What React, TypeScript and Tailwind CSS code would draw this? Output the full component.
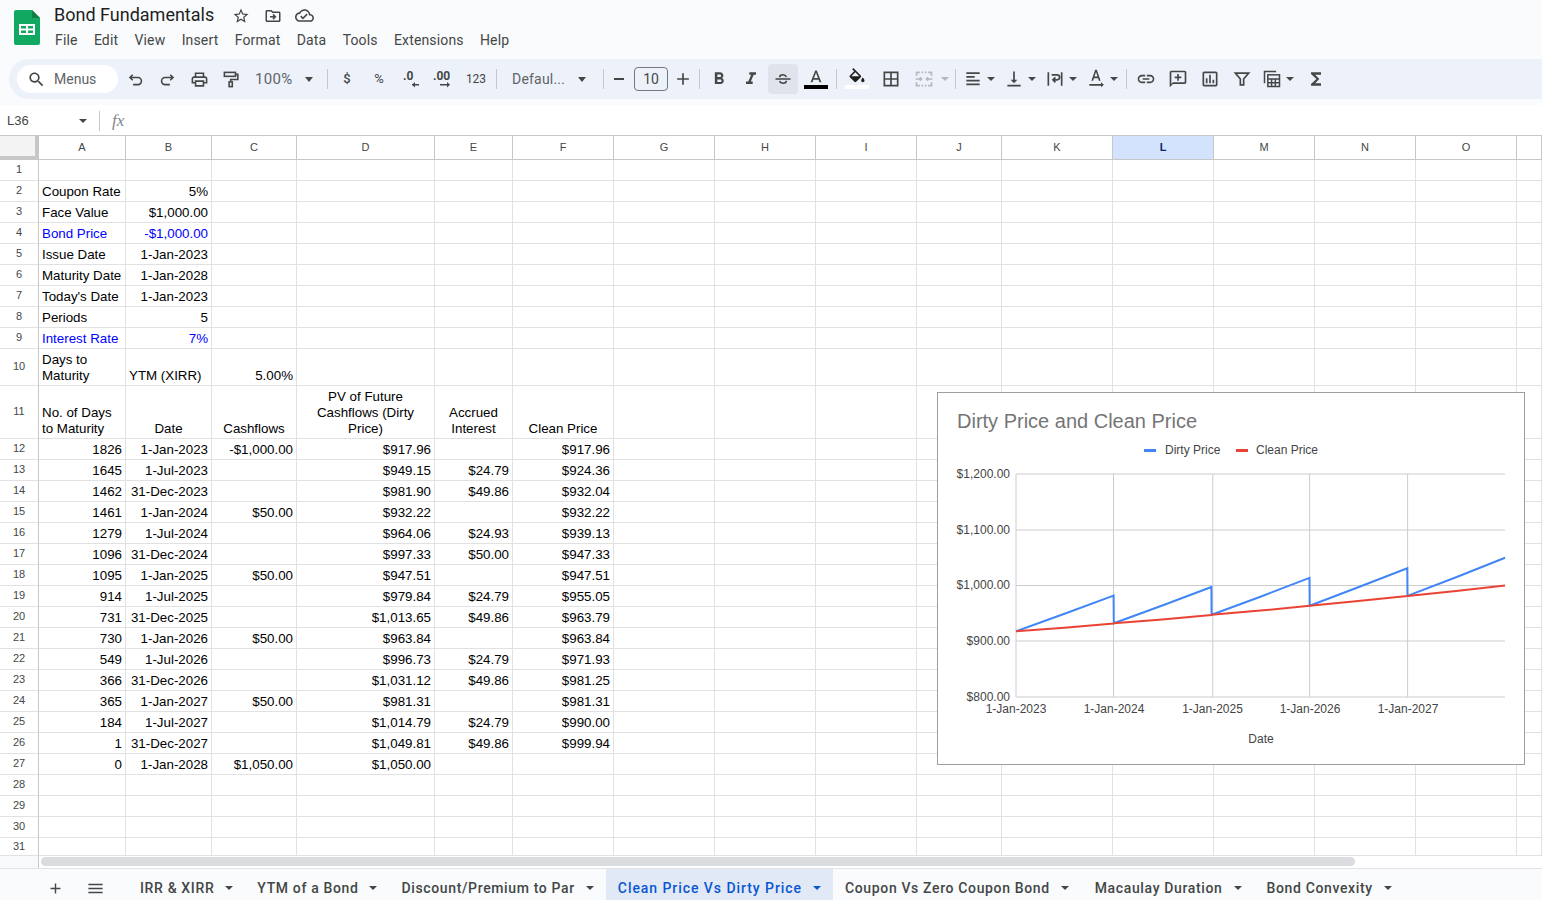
import React from "react";

const I = ({ d, s = 19, c = "#444746", children }: { d?: string; s?: number; c?: string; children?: React.ReactNode }) => (
  <svg width={s} height={s} viewBox="0 0 24 24" fill={c}>
    {d && <path d={d} />}
    {children}
  </svg>
);
const Stroke = ({ s = 19, c = "#444746", w = 2, children }: { s?: number; c?: string; w?: number; children: React.ReactNode }) => (
  <svg width={s} height={s} viewBox="0 0 24 24" fill="none" stroke={c} strokeWidth={w}>
    {children}
  </svg>
);
const Caret = ({ c = "border-t-[#444746]" }: { c?: string }) => (
  <span className={`inline-block w-0 h-0 border-x-[4.5px] border-x-transparent border-t-[5px] ${c}`} />
);
const SmallCaret = ({ c = "border-t-[#444746]" }: { c?: string }) => (
  <span className={`inline-block w-0 h-0 border-x-[4px] border-x-transparent border-t-[4px] ${c}`} />
);
const B = ({ className = "w-8", children }: { className?: string; children: React.ReactNode }) => (
  <div className={`${className} h-[28px] flex items-center justify-center shrink-0`}>{children}</div>
);
const Sep = ({ className = "" }: { className?: string }) => <div className={`w-px h-5 bg-[#c7c7c7] shrink-0 ${className}`} />;

const cols = ["", "A", "B", "C", "D", "E", "F", "G", "H", "I", "J", "K", "L", "M", "N", "O", ""];

type Row = (string | null)[];
const info: Record<number, Row> = {
  2: ["Coupon Rate", "5%"],
  3: ["Face Value", "$1,000.00"],
  4: ["Bond Price", "-$1,000.00"],
  5: ["Issue Date", "1-Jan-2023"],
  6: ["Maturity Date", "1-Jan-2028"],
  7: ["Today's Date", "1-Jan-2023"],
  8: ["Periods", "5"],
  9: ["Interest Rate", "7%"],
  10: ["Days to\nMaturity", "YTM (XIRR)", "5.00%"],
  11: ["No. of Days\nto Maturity", "Date", "Cashflows", "PV of Future\nCashflows (Dirty\nPrice)", "Accrued\nInterest", "Clean Price"],
  12: ["1826", "1-Jan-2023", "-$1,000.00", "$917.96", null, "$917.96"],
  13: ["1645", "1-Jul-2023", null, "$949.15", "$24.79", "$924.36"],
  14: ["1462", "31-Dec-2023", null, "$981.90", "$49.86", "$932.04"],
  15: ["1461", "1-Jan-2024", "$50.00", "$932.22", null, "$932.22"],
  16: ["1279", "1-Jul-2024", null, "$964.06", "$24.93", "$939.13"],
  17: ["1096", "31-Dec-2024", null, "$997.33", "$50.00", "$947.33"],
  18: ["1095", "1-Jan-2025", "$50.00", "$947.51", null, "$947.51"],
  19: ["914", "1-Jul-2025", null, "$979.84", "$24.79", "$955.05"],
  20: ["731", "31-Dec-2025", null, "$1,013.65", "$49.86", "$963.79"],
  21: ["730", "1-Jan-2026", "$50.00", "$963.84", null, "$963.84"],
  22: ["549", "1-Jul-2026", null, "$996.73", "$24.79", "$971.93"],
  23: ["366", "31-Dec-2026", null, "$1,031.12", "$49.86", "$981.25"],
  24: ["365", "1-Jan-2027", "$50.00", "$981.31", null, "$981.31"],
  25: ["184", "1-Jul-2027", null, "$1,014.79", "$24.79", "$990.00"],
  26: ["1", "31-Dec-2027", null, "$1,049.81", "$49.86", "$999.94"],
  27: ["0", "1-Jan-2028", "$1,050.00", "$1,050.00", null, null],
};

function align(r: number, c: number) {
  if (r === 11) return c === 0 ? "text-left" : "text-center";
  if (r === 10) return c === 2 ? "text-right" : "text-left";
  if (r < 10) return c === 0 ? "text-left" : "text-right";
  return "text-right";
}

const rowNums = Array.from({ length: 31 }, (_, i) => i + 1);

const days = [0, 181, 364, 365, 546, 729, 730, 912, 1095, 1096, 1277, 1460, 1461, 1642, 1825];
const dirty = [917.96, 949.15, 981.9, 932.22, 964.06, 997.33, 947.51, 979.84, 1013.65, 963.84, 996.73, 1031.12, 981.31, 1014.79, 1049.81];
const clean = [917.96, 924.36, 932.04, 932.22, 939.13, 947.33, 947.51, 955.05, 963.79, 963.84, 971.93, 981.25, 981.31, 990.0, 999.94];
const px = (d: number) => 1016 + d * 0.268;
const py = (v: number) => 697 - (v - 800) * 0.5575;
const line = (a: number[]) => a.map((v, i) => `${px(days[i]).toFixed(1)},${py(v).toFixed(1)}`).join(" ");

function Chart() {
  const t = "text-[12px] fill-[#444444]";
  return (
    <div className="absolute left-[937px] top-[256px] w-[588px] h-[373px] bg-white border border-[#9e9e9e]">
      <svg width="586" height="371" viewBox="938 393 586 371">
        <text x="957" y="428" className="text-[20px] fill-[#757575]">Dirty Price and Clean Price</text>
        <rect x="1144" y="449" width="12" height="3" fill="#4285f4" />
        <text x="1165" y="454" className={t}>Dirty Price</text>
        <rect x="1236" y="449" width="12" height="3" fill="#ea4335" />
        <text x="1256" y="454" className={t}>Clean Price</text>
        {[474, 530, 585.5, 641, 697].map((y) => (
          <line key={y} x1="1016" x2="1505" y1={y} y2={y} stroke="#cccccc" />
        ))}
        {[1016, 1113.5, 1212.8, 1309.6, 1407.6].map((x) => (
          <line key={x} x1={x} x2={x} y1="474" y2="697" stroke="#cccccc" />
        ))}
        {[["$1,200.00", 478], ["$1,100.00", 534], ["$1,000.00", 589], ["$900.00", 645], ["$800.00", 701]].map(([l, y]) => (
          <text key={l} x="1010" y={y} textAnchor="end" className={t}>{l}</text>
        ))}
        {[["1-Jan-2023", 1016], ["1-Jan-2024", 1114], ["1-Jan-2025", 1212.5], ["1-Jan-2026", 1310], ["1-Jan-2027", 1408]].map(([l, x]) => (
          <text key={l} x={x} y="713" textAnchor="middle" className={t}>{l}</text>
        ))}
        <text x="1261" y="743" textAnchor="middle" className={t}>Date</text>
        <polyline points={line(dirty)} fill="none" stroke="#4285f4" strokeWidth="2" />
        <polyline points={line(clean)} fill="none" stroke="#ea4335" strokeWidth="2" />
      </svg>
    </div>
  );
}

function Grid() {
  return (
    <div className="relative h-[720px] overflow-hidden border-t border-[#c7c7c7] -mt-px box-content">
      <div className="grid grid-cols-[39px_87px_86px_85px_138px_78px_101px_101px_101px_101px_85px_111px_101px_101px_101px_101px_25px] grid-rows-[24px_repeat(9,21px)_37px_53px_repeat(19,21px)_18px] text-[13.33px] leading-4 text-black">
        {cols.map((c, i) =>
          i === 0 ? (
            <div key={i} className="bg-[#f3f3f3] border-r-4 border-b-4 border-[#c7c7c7]" />
          ) : (
            <div
              key={i}
              className={`flex items-center justify-center border-r border-b border-[#c7c7c7] pb-[2px] text-[11px] ${c === "L" ? "bg-[#d3e3fd] text-[#0b2a66] font-bold" : "text-[#444746]"}`}
            >
              {c}
            </div>
          )
        )}
        {rowNums.map((r) => (
          <React.Fragment key={r}>
            <div className="flex items-center justify-center border-r border-r-[#c7c7c7] border-b border-b-[#e1e1e1] pb-[2px] text-[11px] text-[#444746]">
              {r}
            </div>
            {cols.slice(1).map((_, c) => {
              const v = info[r]?.[c] ?? null;
              const blue = (r === 4 || r === 9) && c < 2;
              return (
                <div
                  key={c}
                  className={`flex flex-col justify-end border-r border-b border-[#e1e1e1] px-[3px] pb-px whitespace-pre ${align(r, c)} ${blue ? "text-[#0000ff]" : ""}`}
                >
                  {v}
                </div>
              );
            })}
          </React.Fragment>
        ))}
      </div>
      <Chart />
    </div>
  );
}

const tabs = ["IRR & XIRR", "YTM of a Bond", "Discount/Premium to Par", "Clean Price Vs Dirty Price", "Coupon Vs Zero Coupon Bond", "Macaulay Duration", "Bond Convexity"];

export default function App() {
  return (
    <div className="w-[1542px] h-[900px] overflow-hidden flex flex-col bg-white font-['Liberation_Sans',Arial,sans-serif]">
      <div className="h-[105px] bg-[#f9fbfd] shrink-0">
        <div className="h-[59px] flex">
          <div className="pl-[14px] pt-[10px] w-[54px] shrink-0">
            <svg width="26" height="35" viewBox="0 0 26 35">
              <path d="M2 0h16l8 8v25a2 2 0 0 1-2 2H2a2 2 0 0 1-2-2V2a2 2 0 0 1 2-2z" fill="#11a862" />
              <path d="M18 0l8 8h-8z" fill="#0b8043" />
              <path d="M5 14h16v11H5zM7 16v2.5h5V16zM14 16v2.5h5V16zM7 20.500v2.500h5v-2.500zM14 20.500v2.500h5v-2.500z" fill="#ffffff" fillRule="evenodd" />
            </svg>
          </div>
          <div className="flex flex-col font-['Roboto',sans-serif]">
            <div className="h-[27px] pt-[3px] flex items-center text-[#1f1f1f]">
              <span className="text-[18px] leading-6 w-[178px] shrink-0 -mt-px">Bond Fundamentals</span>
              <div className="w-[32px] flex pt-px"><I s={18} d="M22 9.240l-7.190-.620L12 2 9.190 8.630 2 9.240l5.460 4.730L5.820 21 12 17.270 18.180 21l-1.630-7.030L22 9.240zM12 15.400l-3.760 2.270 1-4.280-3.320-2.880 4.380-.380L12 6.100l1.710 4.040 4.380.380-3.320 2.880 1 4.280L12 15.400z" /></div>
              <div className="w-[31px] flex pt-px">
                <I s={18} d="M20 6h-8l-2-2H4c-1.100 0-2 .900-2 2v12c0 1.100.900 2 2 2h16c1.100 0 2-.900 2-2V8c0-1.100-.900-2-2-2zm0 12H4V6h5.170l2 2H20v10z">
                  <path d="M8 13h7M12 9.800l3.200 3.200-3.200 3.200" fill="none" stroke="#444746" strokeWidth="2" />
                </I>
              </div>
              <I s={19} d="M19.350 10.040C18.670 6.590 15.640 4 12 4 9.110 4 6.600 5.640 5.350 8.040 2.340 8.360 0 10.910 0 14c0 3.310 2.690 6 6 6h13c2.760 0 5-2.240 5-5 0-2.640-2.050-4.780-4.650-4.960zM19 18H6c-2.210 0-4-1.790-4-4 0-2.050 1.530-3.760 3.560-3.970l1.070-.110.500-.950C8.080 7.140 9.940 6 12 6c2.620 0 4.880 1.860 5.390 4.430l.300 1.500 1.530.110c1.560.100 2.780 1.410 2.780 2.960 0 1.650-1.350 3-3 3zm-9-3.820l-2.090-2.090L6.500 13.500 10 17l6.010-6.010-1.410-1.410z" />
            </div>
            <div className="flex gap-[16.3px] pl-px text-[14px] leading-5 tracking-[0.15px] text-[#444746] pt-[3px]">
              {["File", "Edit", "View", "Insert", "Format", "Data", "Tools", "Extensions", "Help"].map((m) => (
                <span key={m}>{m}</span>
              ))}
            </div>
          </div>
        </div>
        <div className="ml-[9px] h-[40px] bg-[#edf2fa] rounded-l-[20px] flex items-center pl-2 font-['Roboto',sans-serif] text-[#444746]">
          <div className="w-[101px] h-[28px] bg-white rounded-[14px] flex items-center pl-[10px] gap-[8px] text-[14px] text-[#5f6368] shrink-0">
            <I s={19} d="M15.500 14h-.790l-.280-.270C15.410 12.590 16 11.110 16 9.500 16 5.910 13.090 3 9.500 3S3 5.910 3 9.500 5.910 16 9.500 16c1.610 0 3.090-.590 4.230-1.570l.270.280v.790l5 4.990L20.490 19l-4.990-5zm-6 0C7.010 14 5 11.990 5 9.500S7.010 5 9.500 5 14 7.010 14 9.500 11.990 14 9.500 14z" />
            <span>Menus</span>
          </div>
          <B className="w-8 ml-px">
            <Stroke><path d="M8.500 6 5 9.500 8.500 13M5 9.500h10a4.500 4.500 0 0 1 0 9H9" /></Stroke>
          </B>
          <B>
            <Stroke><path d="M15.500 6 19 9.500 15.500 13M19 9.500H9a4.500 4.500 0 0 0 0 9h6" /></Stroke>
          </B>
          <B>
            <I d="M19 8h-1V3H6v5H5c-1.660 0-3 1.340-3 3v6h4v4h12v-4h4v-6c0-1.660-1.340-3-3-3zM8 5h8v3H8V5zm8 12v2H8v-4h8v2zm2-2v-2H6v2H4v-4c0-.550.450-1 1-1h14c.550 0 1 .450 1 1v4h-2z" />
          </B>
          <B>
            <Stroke>
              <rect x="3" y="3" width="14" height="5" />
              <path d="M17 5.500h3v6.500h-9v2.500" />
              <rect x="9" y="15" width="4" height="6" />
            </Stroke>
          </B>
          <div className="w-[75px] shrink-0 flex items-center pl-2 text-[15px] tracking-[0.3px] text-[#5f6368]">
            <span className="w-[50px]">100%</span>
            <Caret />
          </div>
          <Sep className="ml-[5px] mr-[3px]" />
          <B><span className="text-[13px] font-medium">$</span></B>
          <B><span className="text-[13px]">%</span></B>
          <B>
            <svg width="22" height="22" viewBox="0 0 22 22" fill="#444746">
              <text x="3" y="12" className="text-[12px] font-bold">.0</text>
              <path d="M12 16h7v1.500h-7zM12 16.700l3-2.700v5.500z" />
            </svg>
          </B>
          <B>
            <svg width="22" height="22" viewBox="0 0 22 22" fill="#444746">
              <text x="1" y="12" className="text-[12px] font-bold">.00</text>
              <path d="M8 16h7v1.500H8zM18 16.700l-3-2.700v5.500z" />
            </svg>
          </B>
          <B className="w-8 ml-px"><span className="text-[12px]">123</span></B>
          <Sep className="ml-[4px]" />
          <div className="w-[106px] shrink-0 flex items-center pl-[15px] text-[14px] tracking-[0.2px] text-[#5f6368]">
            <span className="w-[66px] whitespace-nowrap">Defaul...</span>
            <Caret />
          </div>
          <Sep />
          <B className="w-6 ml-[3px]"><div className="w-[10px] h-[2px] bg-[#444746]" /></B>
          <div className="w-[34px] h-[24px] ml-[3px] border border-[#747775] rounded-[4px] flex items-center justify-center text-[14px] shrink-0">10</div>
          <B className="w-6 ml-[3px]"><I s={20} d="M19 13h-6v6h-2v-6H5v-2h6V5h2v6h6v2z" /></B>
          <Sep className="ml-[4px] mr-[3px]" />
          <B><I s={20} d="M15.600 10.790c.970-.670 1.650-1.770 1.650-2.790 0-2.260-1.750-4-4-4H7v14h7.040c2.090 0 3.710-1.700 3.710-3.790 0-1.520-.860-2.820-2.150-3.420zM10 6.500h3c.830 0 1.500.670 1.500 1.500s-.670 1.500-1.500 1.500h-3v-3zm3.500 9H10v-3h3.500c.830 0 1.500.670 1.500 1.500s-.670 1.500-1.500 1.500z" /></B>
          <B><I s={20} d="M10 4v3h2.210l-3.420 8H6v3h8v-3h-2.210l3.420-8H18V4z" /></B>
          <div className="w-[30px] h-[30px] ml-px bg-[#dfe3eb] rounded flex items-center justify-center shrink-0">
            <Stroke s={20} w={1.800}><path d="M3 12h18M8 10c0-2 2-3 4-3s3.500 1 4 2.500M16 14c0 2-2 3-4 3s-3.500-1-4-2.500" /></Stroke>
          </div>
          <div className="w-8 ml-[2px] h-[30px] shrink-0 flex flex-col items-center justify-end">
            <div className="-mb-[3px]"><I s={20} d="M11 3L5.500 17h2.250l1.120-3h6.250l1.120 3h2.250L13 3h-2zm-1.380 9L12 5.670 14.380 12H9.620z" /></div>
            <div className="w-[24px] h-[4px] bg-black mb-[5px]" />
          </div>
          <Sep className="ml-[4px] mr-[4px]" />
          <div className="w-8 h-[30px] shrink-0 flex flex-col items-center justify-end">
            <div className="-mb-[3px]"><I s={20} c="#1f1f1f" d="M16.560 8.940L7.620 0 6.210 1.410l2.380 2.380-5.150 5.150c-.590.590-.590 1.540 0 2.120l5.500 5.500c.290.290.680.440 1.060.440s.770-.150 1.060-.440l5.500-5.500c.590-.580.590-1.530 0-2.120zM5.210 10L10 5.210 14.790 10H5.210zM19 11.500s-2 2.170-2 3.500c0 1.100.900 2 2 2s2-.900 2-2c0-1.330-2-3.500-2-3.500z" /></div>
            <div className="w-[24px] h-[4px] bg-white mb-[5px]" />
          </div>
          <B className="w-8 ml-[2px]"><I s={20} d="M3 3v18h18V3H3zm8 16H5v-6h6v6zm0-8H5V5h6v6zm8 8h-6v-6h6v6zm0-8h-6V5h6v6z" /></B>
          <B className="w-8 ml-px">
            <Stroke s={20} c="#b4b8bd" w={2}>
              <path d="M3 4v4M3 11v2M3 16v4h4M9 20h2M13 20h2M17 20h4v-4M21 13v-2M21 8V4h-4M15 4h-2M11 4H9M7 4H3M4 12h5M7 10l2 2-2 2M20 12h-5M17 10l-2 2 2 2" />
            </Stroke>
          </B>
          <B className="w-[10px]"><SmallCaret c="border-t-[#b4b8bd]" /></B>
          <Sep className="ml-[5px] mr-[5px]" />
          <B className="w-6"><Stroke s={20} w={2}><path d="M4 5h16M4 9.500h10M4 14h16M4 18.500h16" /></Stroke></B>
          <B className="w-[12px]"><SmallCaret /></B>
          <B className="w-6 ml-[5px]"><I s={20} d="M16 13h-3V3h-2v10H8l4 4 4-4zM4 19v2h16v-2H4z" /></B>
          <B className="w-[12px]"><SmallCaret /></B>
          <B className="w-6 ml-[5px]">
            <Stroke s={20}><path d="M4 4v16M20 4v16M8 7h6.500a3 3 0 0 1 0 6H10M12.500 10l-3 3 3 3" /></Stroke>
          </B>
          <B className="w-[12px]"><SmallCaret /></B>
          <B className="w-6 ml-[5px]">
            <I s={20} d="M11 1L6.500 14h2.100l1-3h4.800l1 3h2.100L13 1h-2zm-.800 8L12 3.700 13.800 9h-3.600zM4 18h14v-2l3.500 3-3.500 3v-2H4z" />
          </B>
          <B className="w-[12px]"><SmallCaret /></B>
          <Sep className="ml-[6px]" />
          <B className="w-8 ml-[3px]"><I s={20} d="M3.900 12c0-1.710 1.390-3.100 3.100-3.100h4V7H7c-2.760 0-5 2.240-5 5s2.240 5 5 5h4v-1.900H7c-1.710 0-3.100-1.390-3.100-3.100zM8 13h8v-2H8v2zm9-6h-4v1.900h4c1.710 0 3.100 1.390 3.100 3.100s-1.390 3.100-3.100 3.100h-4V17h4c2.760 0 5-2.240 5-5s-2.240-5-5-5z" /></B>
          <B><I s={20} d="M20 2H4c-1.100 0-2 .900-2 2v18l4-4h14c1.100 0 2-.900 2-2V4c0-1.100-.900-2-2-2zm0 14H6l-2 2V4h16v12zM11 6h2v3h3v2h-3v3h-2v-3H8V9h3z" /></B>
          <B><I s={20} d="M19 3H5c-1.100 0-2 .900-2 2v14c0 1.100.900 2 2 2h14c1.100 0 2-.900 2-2V5c0-1.100-.900-2-2-2zm0 16H5V5h14v14zM7 11h2v6H7zM11 7h2v10h-2zM15 13h2v4h-2z" /></B>
          <B><Stroke s={20}><path d="M4 5h16l-6 7v7h-4v-7z" /></Stroke></B>
          <B className="w-[28px]">
            <Stroke s={20} w={1.800}>
              <path d="M3 17V3h14" />
              <rect x="7" y="7" width="14" height="14" />
              <path d="M7 12h14M7 16.500h14M11.500 12v9M16 12v9" />
            </Stroke>
          </B>
          <B className="w-[8px]"><SmallCaret /></B>
          <B className="w-8 ml-[6px]"><I s={20} d="M18 4H6v2l6.500 6L6 18v2h12v-3h-7l5-5-5-5h7z" /></B>
        </div>
      </div>

      <div className="h-[31px] shrink-0 flex items-center pt-px border-b border-[#c7c7c7] text-[#444746]">
        <div className="w-[99px] pl-[7px] flex items-center text-[13px] shrink-0">
          <span className="w-[72px]">L36</span>
          <SmallCaret />
        </div>
        <Sep />
        <span className="ml-[12px] text-[17px] italic font-['Liberation_Serif',serif] text-[#80868b]">fx</span>
      </div>

      <Grid />

      <div className="h-[12px] shrink-0 flex">
        <div className="w-[39px] bg-[#f8f9fa] border-r border-[#c7c7c7] shrink-0" />
        <div className="pl-[2px] pt-px">
          <div className="w-[1314px] h-[9px] bg-[#dadce0] rounded-[5px]" />
        </div>
      </div>

      <div className="h-[32px] shrink-0 bg-[#f9fbfd] border-t border-[#e1e3e6] flex font-['Roboto',sans-serif] text-[14px] text-[#444746]">
        <div className="w-[128px] shrink-0 flex items-center pl-[47px] pt-[7px] gap-[22px]">
          <I s={17} d="M19 13h-6v6h-2v-6H5v-2h6V5h2v6h6v2z" />
          <I s={19} d="M3 6h18v2H3zM3 11h18v2H3zM3 16h18v2H3z" />
        </div>
        {tabs.map((t, i) => {
          const on = i === 3;
          return (
            <div key={t} className={`flex items-center pt-[7px] px-3 gap-[11px] font-medium ${on ? "bg-[#e1e9f7] text-[#0b57d0] font-bold tracking-[0.94px]" : "tracking-[0.64px]"} ${i === 4 ? "mr-[2px]" : ""} ${i === 5 ? "mr-px" : ""}`}>
              <span className="whitespace-nowrap">{t}</span>
              <SmallCaret c={on ? "border-t-[#0b57d0]" : "border-t-[#444746]"} />
            </div>
          );
        })}
      </div>
    </div>
  );
}
